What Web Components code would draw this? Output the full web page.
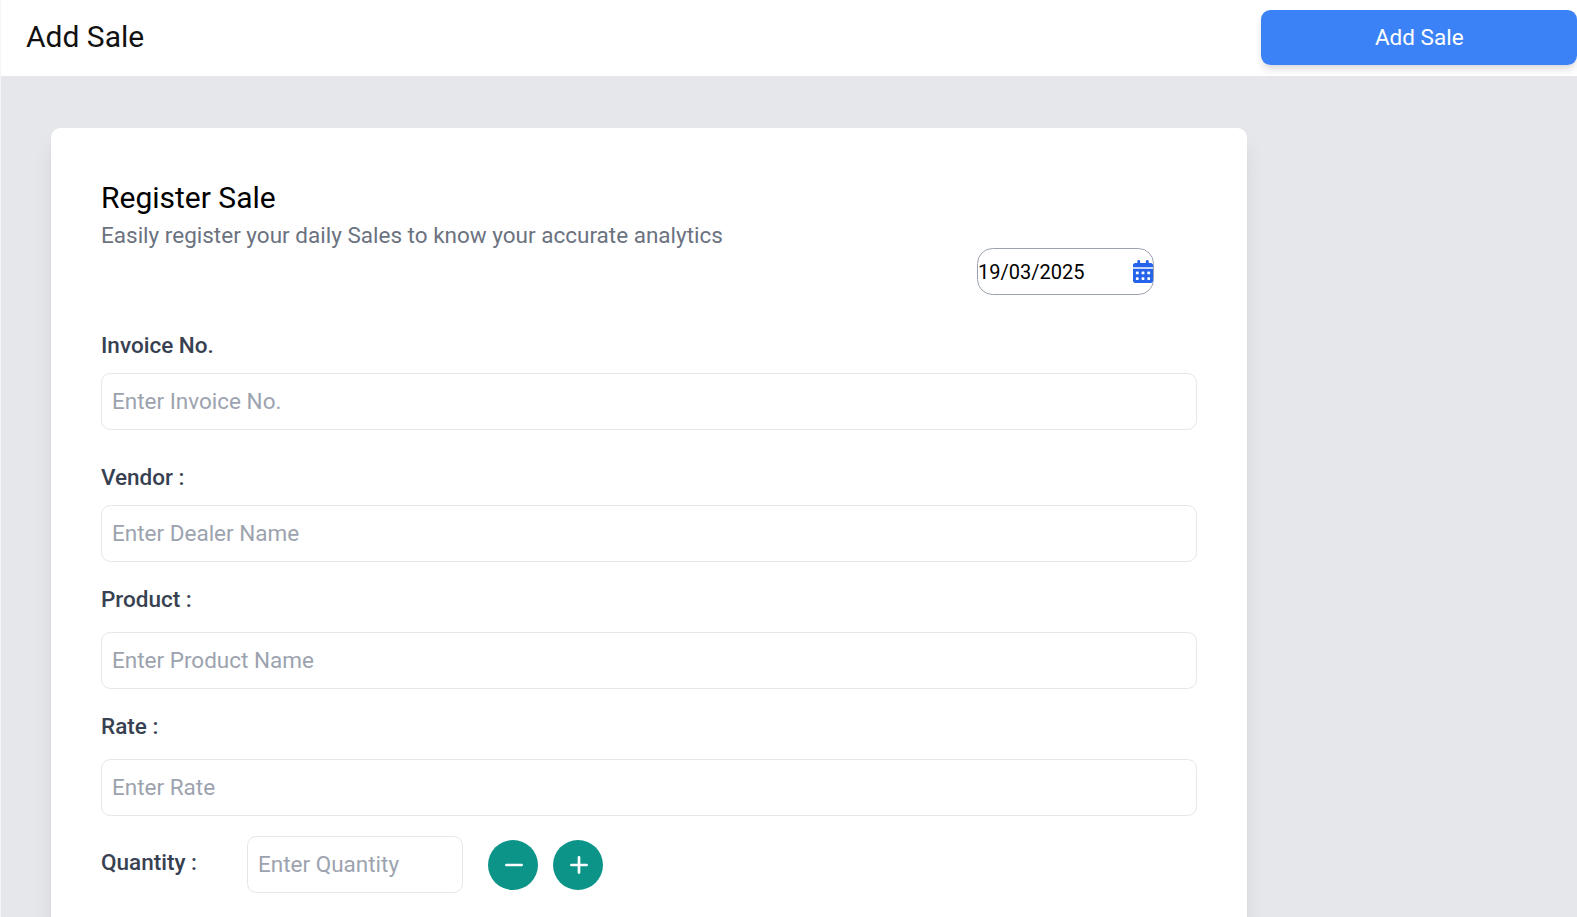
<!DOCTYPE html>
<html lang="en">
<head>
<meta charset="utf-8">
<title>Add Sale</title>
<style>
html, body { margin: 0; height: 100%; overflow: hidden; background: #e5e7eb; }
body { font-family: Roboto, "Liberation Sans", sans-serif; font-size: 22.5px; line-height: 32px; color: #000; }
</style>
</head>
<body>
<sale-page></sale-page>
<script>
class BaseElement extends HTMLElement {
  constructor() {
    super();
    this.attachShadow({ mode: 'open' }).innerHTML = this.render();
  }
}

customElements.define('page-header', class extends BaseElement {
  render() {
    return `<style>
      :host { display: flex; box-sizing: border-box; height: 76px; background: #fff; padding: 10px 0 0 25px; justify-content: space-between; align-items: flex-start; }
      h1 { margin: 9px 0 0; font-size: 30px; line-height: 36px; font-weight: 400; color: #111; }
      button { width: 316.5px; height: 55px; box-sizing: border-box; border: 0; padding: 0 0 2px 1px; border-radius: 9.4px; background: #3b82f6; color: #fff; font: inherit; box-shadow: 0 6px 9px -1.5px rgba(0,0,0,.1), 0 3px 6px -3px rgba(0,0,0,.1); }
    </style><h1>Add Sale</h1><button><slot></slot></button>`;
  }
});

customElements.define('date-field', class extends BaseElement {
  render() {
    return `<style>
      :host { display: flex; box-sizing: border-box; width: 177px; height: 47px; border: 1px solid #9ca3af; border-radius: 15.6px; align-items: center; justify-content: space-between; font-size: 20px; }
      svg { width: 20px; height: 23px; display: block; }
    </style><span><slot></slot></span>
    <svg viewBox="0 0 448 512"><path fill="#2563eb" fill-rule="evenodd" d="M128 0c17.700 0 32 14.300 32 32V64H288V32c0-17.700 14.300-32 32-32s32 14.300 32 32V64h48c26.500 0 48 21.500 48 48v48H0V112C0 85.500 21.500 64 48 64H96V32c0-17.700 14.300-32 32-32zM0 192H448V464c0 26.500-21.500 48-48 48H48c-26.500 0-48-21.500-48-48V192zM64 272v32c0 8.800 7.200 16 16 16h32c8.800 0 16-7.200 16-16V272c0-8.800-7.200-16-16-16H80c-8.800 0-16 7.200-16 16zM192 272v32c0 8.800 7.200 16 16 16h32c8.800 0 16-7.200 16-16V272c0-8.800-7.200-16-16-16H208c-8.800 0-16 7.200-16 16zM320 272v32c0 8.800 7.200 16 16 16h32c8.800 0 16-7.200 16-16V272c0-8.800-7.200-16-16-16H336c-8.800 0-16 7.200-16 16zM64 400v32c0 8.800 7.200 16 16 16h32c8.800 0 16-7.200 16-16V400c0-8.800-7.200-16-16-16H80c-8.800 0-16 7.200-16 16zM192 400v32c0 8.800 7.200 16 16 16h32c8.800 0 16-7.200 16-16V400c0-8.800-7.200-16-16-16H208c-8.800 0-16 7.200-16 16zM320 400v32c0 8.800 7.200 16 16 16h32c8.800 0 16-7.200 16-16V400c0-8.800-7.200-16-16-16H336c-8.800 0-16 7.200-16 16z"/></svg>`;
  }
});

customElements.define('field-box', class extends BaseElement {
  render() {
    return `<style>
      :host { display: flex; box-sizing: border-box; height: 57px; border: 1px solid #e5e7eb; border-radius: 9.4px; padding: 0 10px 2px; align-items: center; color: #9ca3af; }
    </style><span><slot></slot></span>`;
  }
});

customElements.define('form-field', class extends BaseElement {
  render() {
    return `<style>
      :host { display: flex; flex-direction: column; gap: var(--gap, 17px); }
      label { font-weight: 500; color: #374151; line-height: 32px; height: 32px; }
    </style><label><slot name="label"></slot></label><field-box><slot></slot></field-box>`;
  }
});

customElements.define('round-button', class extends BaseElement {
  static get observedAttributes() { return ['kind']; }
  attributeChangedCallback() {
    this.shadowRoot.querySelector('path').setAttribute('d', this.getAttribute('kind') === 'plus' ? 'M5 12h14M12 5v14' : 'M5 12h14');
  }
  render() {
    return `<style>
      :host { display: flex; box-sizing: border-box; width: 50px; height: 50px; padding: 0 0 1px 1.5px; border-radius: 50%; background: #0d9488; align-items: center; justify-content: center; }
      svg { width: 26px; height: 26px; display: block; }
    </style><svg viewBox="0 0 24 24" fill="none" stroke="#fff" stroke-width="2.500" stroke-linecap="round"><path/></svg>`;
  }
});

customElements.define('quantity-row', class extends BaseElement {
  render() {
    return `<style>
      :host { display: flex; align-items: flex-start; }
      label { width: 146px; font-weight: 500; color: #374151; margin-top: 10px; }
      field-box { width: 216px; margin-right: 25px; }
      round-button { margin: 4px 15px 0 0; }
    </style><label>Quantity :</label><field-box><slot></slot></field-box><round-button kind="minus"></round-button><round-button kind="plus"></round-button>`;
  }
});

customElements.define('sale-card', class extends BaseElement {
  render() {
    return `<style>
      :host { display: block; box-sizing: border-box; width: 1196px; height: 900px; margin: 52px 0 0 50px; padding: 50px; background: #fff; border-radius: 9.4px; box-shadow: 0 15.6px 23.4px -4.7px rgba(0,0,0,.1), 0 6.25px 9.4px -6.25px rgba(0,0,0,.1); }
      h2 { margin: 0; font-size: 30px; line-height: 39px; font-weight: 400; }
      p { margin: 2px 0 0; color: #6b7280; line-height: 32px; }
      date-field { margin: -3px 43px 0 auto; }
      .first { margin-top: 34px; --gap: 12px; }
      .second { margin-top: 31px; --gap: 12px; }
      .field { margin-top: 21px; }
      quantity-row { margin-top: 20px; }
    </style>
    <h2>Register Sale</h2>
    <p>Easily register your daily Sales to know your accurate analytics</p>
    <date-field>19/03/2025</date-field>
    <form-field class="first"><span slot="label">Invoice No.</span>Enter Invoice No.</form-field>
    <form-field class="second"><span slot="label">Vendor :</span>Enter Dealer Name</form-field>
    <form-field class="field"><span slot="label">Product :</span>Enter Product Name</form-field>
    <form-field class="field"><span slot="label">Rate :</span>Enter Rate</form-field>
    <quantity-row>Enter Quantity</quantity-row>`;
  }
});

customElements.define('sale-page', class extends BaseElement {
  render() {
    return `<style>
      :host { display: flow-root; box-sizing: border-box; height: 917px; overflow: hidden; border-left: 1px solid #f5f5f5; background: #e5e7eb; }
    </style><page-header>Add Sale</page-header><sale-card></sale-card>`;
  }
});
</script>
</body>
</html>
